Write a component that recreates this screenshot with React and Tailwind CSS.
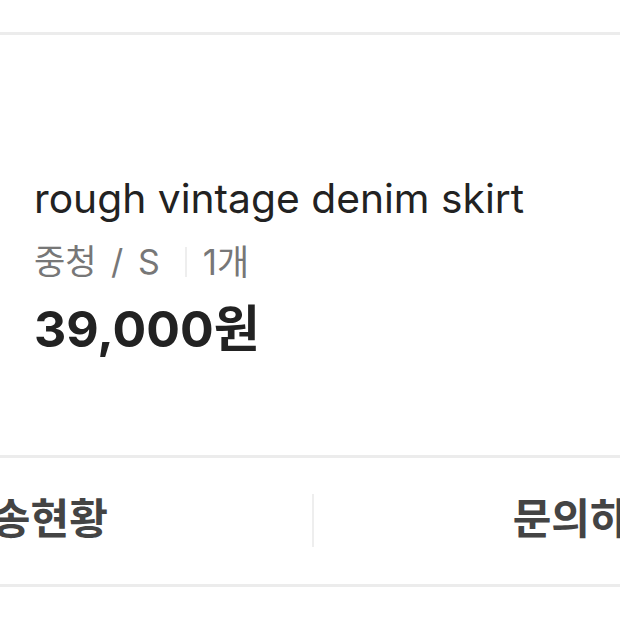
export default function App() {
  return (
    <div className="w-[620px] h-[620px] overflow-hidden bg-white" style={{ fontFamily: 'Inter, "Noto Sans CJK KR", sans-serif' }}>
      <div className="h-[32px]" />
      <div className="h-[3px] bg-[#ececec]" />
      <div className="pl-[34px] pt-[139px] h-[420px]">
        <div className="text-[40.75px] leading-[50px] text-[#222] whitespace-nowrap">rough vintage denim skirt</div>
        <div className="flex items-center text-[34px] leading-[40px] text-[#777] mt-[18px] whitespace-nowrap">
          <span className="[word-spacing:5px]">중청 / S</span>
          <span className="w-[2px] h-[30px] bg-[#eee] ml-[25px] mr-[16px]" />
          <span className="text-[35px]">1개</span>
        </div>
        <div className="text-[50px] leading-[60px] font-bold text-[#222] mt-[17px] whitespace-nowrap">39,000원</div>
      </div>
      <div className="h-[3px] bg-[#ececec]" />
      <div className="flex -ml-[251px] h-[126px] items-center pb-[6px]">
        <div className="w-[563px] shrink-0 text-center text-[42px] font-bold text-[#444] whitespace-nowrap">배송현황</div>
        <div className="w-[2px] h-[53px] shrink-0 bg-[#eee] mt-[4px]" />
        <div className="w-[552px] shrink-0 text-center text-[42px] font-bold text-[#444] whitespace-nowrap">문의하기</div>
      </div>
      <div className="h-[3px] bg-[#ececec]" />
    </div>
  );
}
